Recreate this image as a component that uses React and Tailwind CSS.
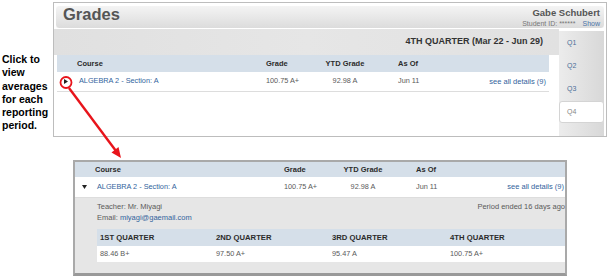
import React from "react";

function HeaderRow({ h = "h-[17px]" }) {
  return (
    <div className={`flex ${h} items-center bg-[#d5dfe9] text-[7.5px] font-bold text-[#2b2b2b]`}>
      <div className="w-[209px] pl-[20px]">Course</div>
      <div className="w-[59px]">Grade</div>
      <div className="w-[73px]">
        <span className="inline-block w-[40px] text-center">YTD Grade</span>
      </div>
      <div>As Of</div>
    </div>
  );
}

function CourseRow({ expanded, h = "h-[20px]", pr = "pr-[3px]" }) {
  return (
    <div className={`flex ${h} items-center border-b border-[#dddddd] bg-white text-[7.3px] text-[#5a5a5a]`}>
      <div className="flex w-[22px] pl-[7px]">
        {expanded ? (
          <svg width="5" height="4" viewBox="0 0 5 4">
            <polygon points="0,0 5,0 2.5,4" fill="#222" />
          </svg>
        ) : (
          <svg width="4" height="5" viewBox="0 0 4 5">
            <polygon points="0,0 4,2.5 0,5" fill="#222" />
          </svg>
        )}
      </div>
      <div className="w-[187px] text-[#33649d]">ALGEBRA 2 - Section: A</div>
      <div className="w-[59px] text-[#5a5a5a]">100.75 A+</div>
      <div className="w-[73px] text-[#5a5a5a]">
        <span className="inline-block w-[40px] text-center">92.98 A</span>
      </div>
      <div className="text-[#5a5a5a]">Jun 11</div>
      <div className={`ml-auto ${pr} text-[7.5px] text-[#33649d]`}>see all details (9)</div>
    </div>
  );
}

export default function App() {
  return (
    <div className="relative h-[279px] w-[608px] overflow-hidden bg-white font-['Liberation_Sans',Arial,sans-serif]">
      {/* top screenshot */}
      <div className="flex pt-[2px]">
        <div className="w-[53px] shrink-0 pl-[2px] pt-[51px] text-[10.5px] font-bold leading-[13.3px] text-black">
          Click to view averages for each reporting period.
        </div>
        <div className="flex h-[135px] w-[554px] shrink-0 flex-col border border-[#bdbdbd] bg-white">
          <div className="mx-[1px] mt-[2px] flex h-[24px] shrink-0 items-start justify-between rounded-[4px] border border-white bg-gradient-to-b from-[#f4f4f4] to-[#dcdcdc] pl-[7px] pr-[4px]">
            <div className="text-[16.5px] font-bold leading-none text-[#555]">Grades</div>
            <div className="flex flex-col items-end pt-[1px]">
              <div className="text-[9.5px] font-bold leading-[12px] text-[#555]">Gabe Schubert</div>
              <div className="text-[7px] leading-[9px] text-[#777]">
                Student ID: ******<span className="ml-[7px] text-[#4a74a8]">Show</span>
              </div>
            </div>
          </div>
          <div className="flex flex-1">
            <div className="flex flex-1 flex-col">
              <div className="flex h-[26px] items-center justify-end bg-gradient-to-r from-[#e0e0e0] via-[#e6e6e6] to-[#e1e1e1] pr-[16px] text-[9px] font-bold text-[#333]">
                4TH QUARTER (Mar 22 - Jun 29)
              </div>
              <div className="ml-[3px] mr-[10px] flex flex-col">
                <HeaderRow />
                <CourseRow expanded={false} />
              </div>
            </div>
            <div className="mr-[2px] mt-[2px] flex w-[45px] flex-col bg-gradient-to-r from-[#ececec] to-[#d8d8d8] pt-[1px] text-[7px] text-[#4d6f99]">
              <div className="flex h-[23px] items-center pl-[8px]">Q1</div>
              <div className="flex h-[23px] items-center pl-[8px]">Q2</div>
              <div className="flex h-[23px] items-center pl-[8px]">Q3</div>
              <div className="flex h-[22px] items-center rounded-[3px] border border-[#d4d4d4] bg-white pl-[7px] text-[#888]">Q4</div>
            </div>
          </div>
        </div>
      </div>

      {/* bottom screenshot */}
      <div className="ml-[73px] mt-[23px] flex w-[494px] flex-col border-2 border-b-[3px] border-[#a9a9a9] border-b-[#999]">
        <HeaderRow h="h-[15px]" />
        <CourseRow expanded h="h-[21px]" pr="pr-[1px]" />
        <div className="flex flex-col bg-[#e6e6e6] pl-[22px] pt-[2.5px] pb-[11px] text-[7.5px] text-[#5a5a5a]">
          <div className="flex justify-between leading-[11px]">
            <div>Teacher: Mr. Miyagi</div>
            <div>Period ended 16 days ago</div>
          </div>
          <div className="leading-[11px]">
            Email: <span className="text-[#33649d]">miyagi@gaemail.com</span>
          </div>
          <div className="mt-[6.5px] grid h-[17px] grid-cols-[116px_116px_118px_1fr] items-center bg-[#d5dfe9] pl-[3px] text-[7.7px] font-bold text-[#2b2b2b]">
            <div>1ST QUARTER</div>
            <div>2ND QUARTER</div>
            <div>3RD QUARTER</div>
            <div>4TH QUARTER</div>
          </div>
          <div className="grid h-[16px] grid-cols-[116px_116px_118px_1fr] items-center bg-white pl-[3px] text-[7.3px] text-[#5a5a5a]">
            <div>88.46 B+</div>
            <div>97.50 A+</div>
            <div>95.47 A</div>
            <div>100.75 A+</div>
          </div>
        </div>
      </div>

      {/* red annotation overlay */}
      <svg className="pointer-events-none absolute left-0 top-0" width="608" height="279" viewBox="0 0 608 279">
        <circle cx="66" cy="82.5" r="5.5" fill="none" stroke="#e8141b" strokeWidth="1.8" />
        <line x1="69" y1="88" x2="116" y2="151" stroke="#e8141b" strokeWidth="2.4" />
        <polygon points="121,158 111.5,152.5 118.5,147" fill="#e8141b" />
      </svg>
    </div>
  );
}
